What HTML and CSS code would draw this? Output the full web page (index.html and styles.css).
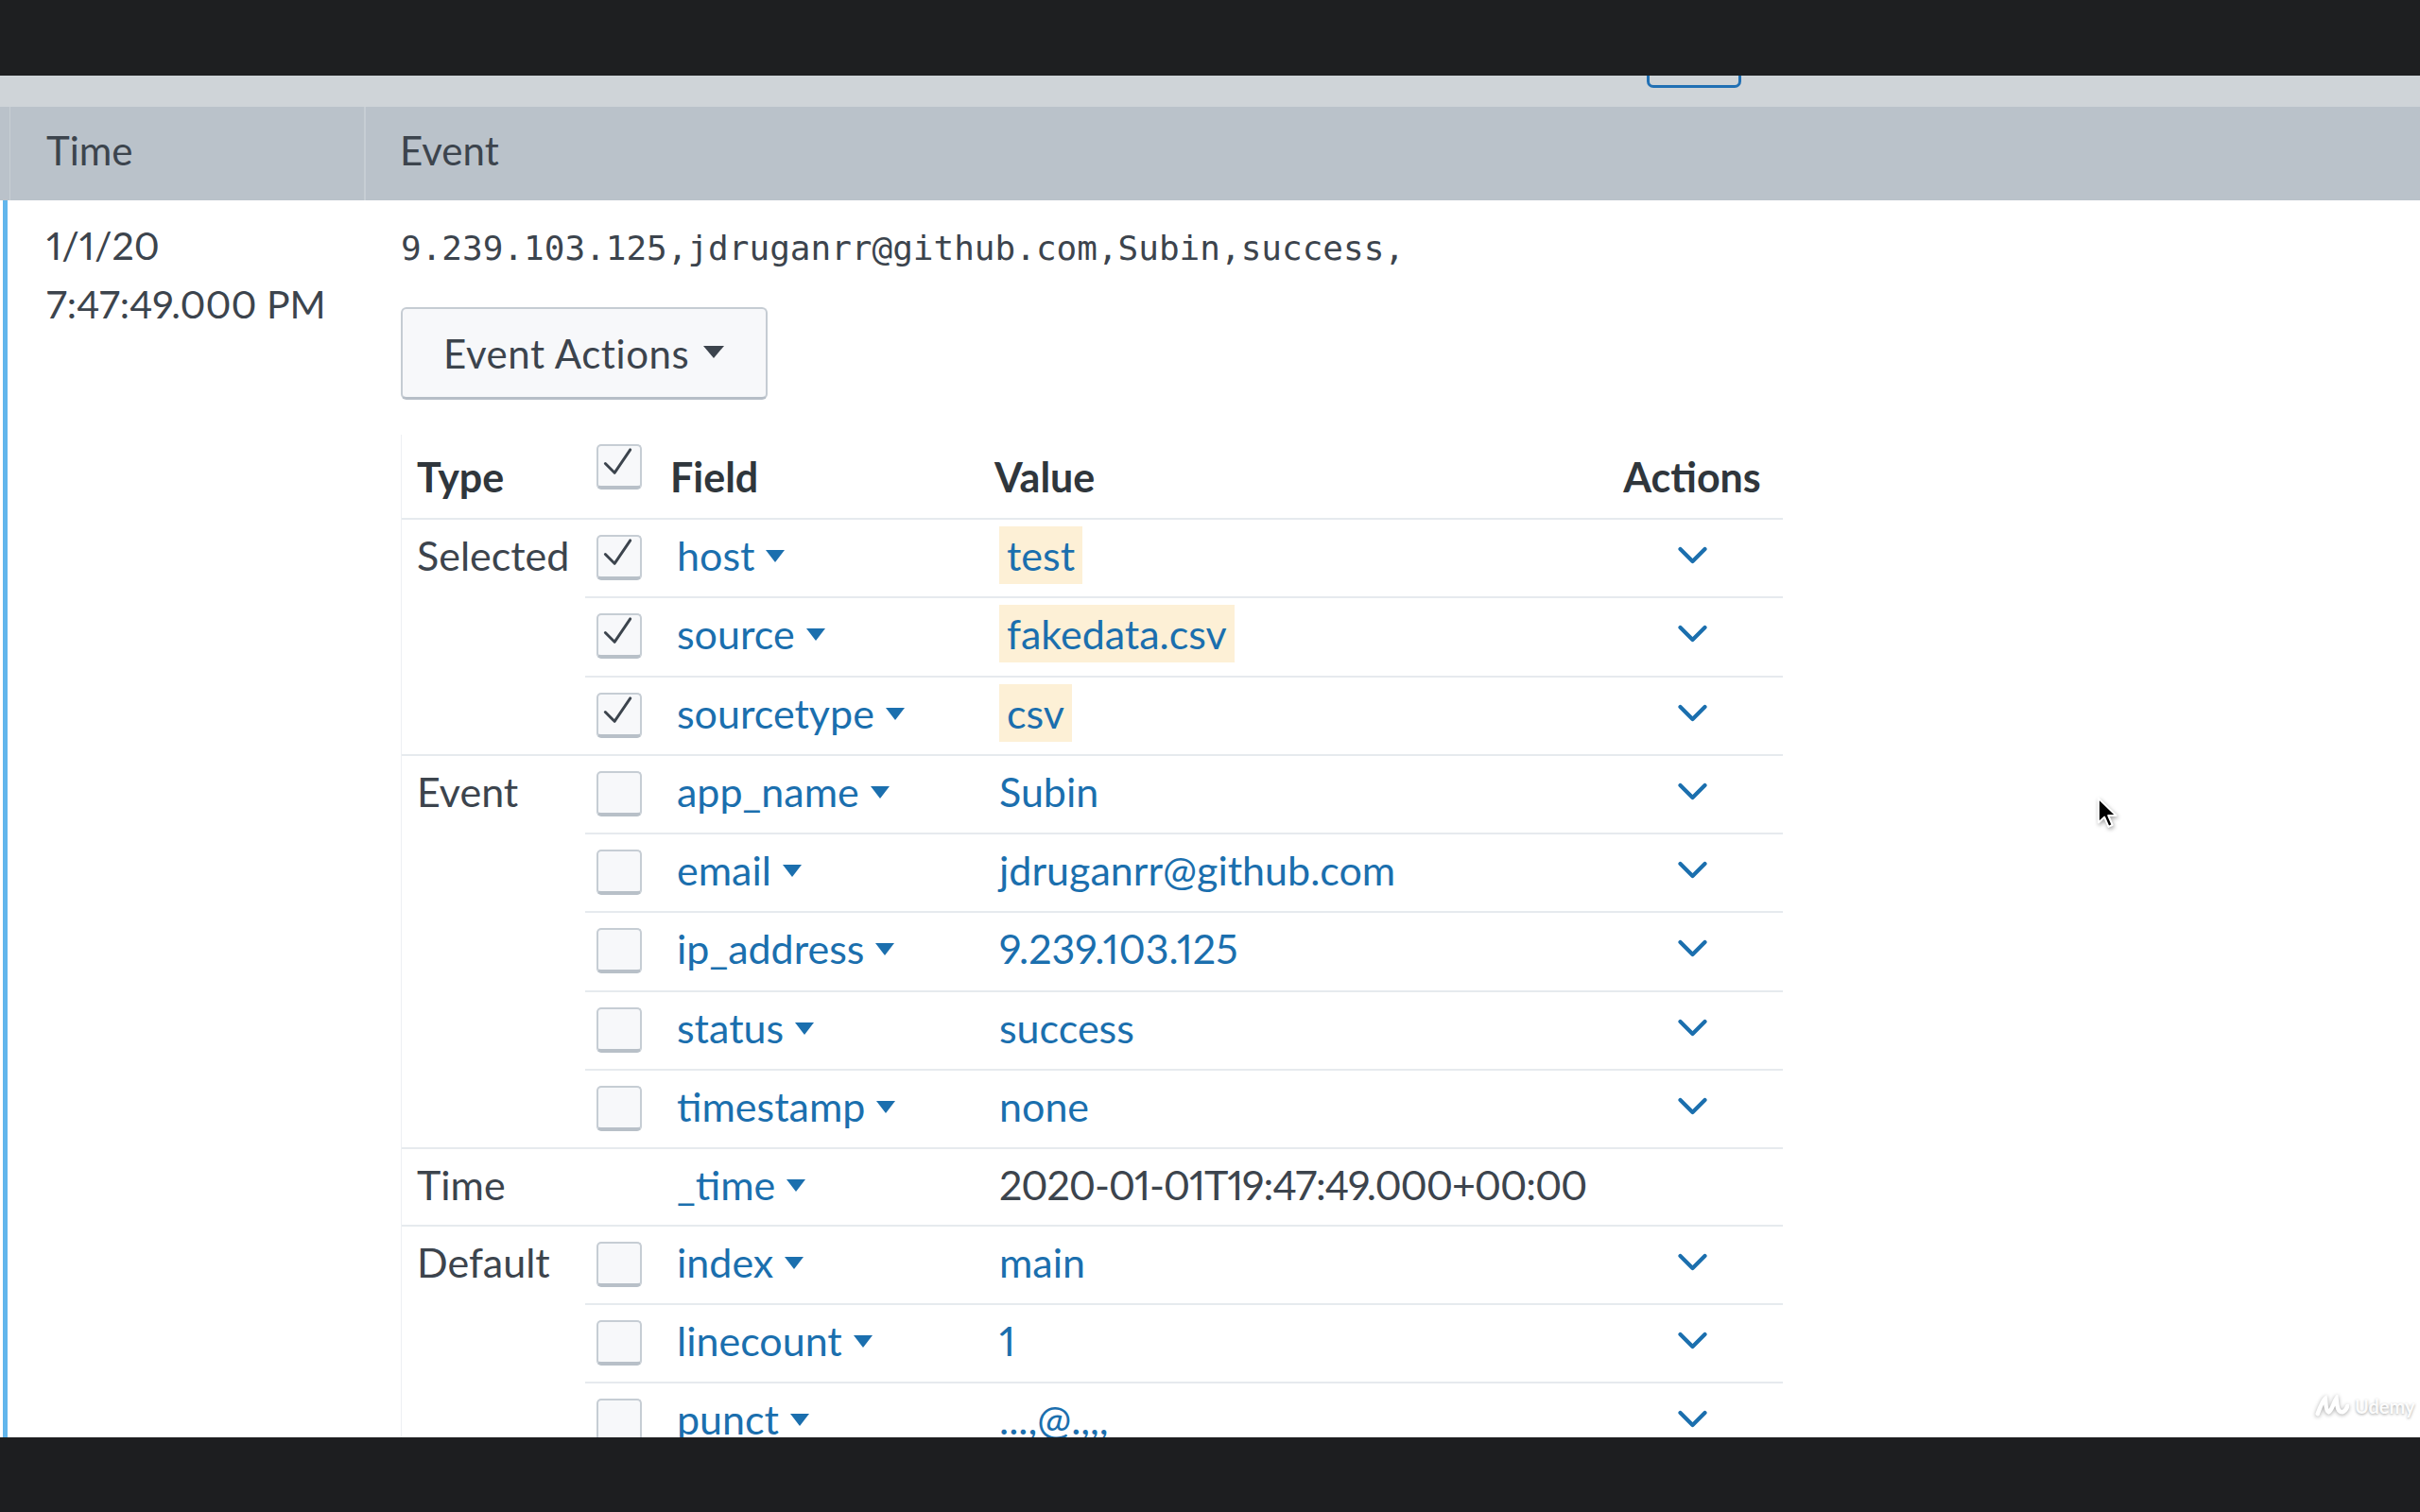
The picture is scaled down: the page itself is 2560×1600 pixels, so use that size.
FILE: index.html
```html
<!DOCTYPE html>
<html lang="en">
<head>
<meta charset="utf-8">
<title>Splunk event</title>
<link rel="stylesheet" href="styles.css">
</head>
<body>
<div class="screen">
  <div class="topbar"></div>
  <div class="main">
    <div class="toolbar"><span class="tb-btn"></span></div>
    <div class="thead">
      <div class="th-gutter"></div>
      <div class="th th-time">Time</div>
      <div class="th th-event">Event</div>
    </div>
    <div class="event">
      <div class="ev-time">
        <div>1/1/20</div>
        <div>7:47:49.000 PM</div>
      </div>
      <div class="ev-body">
        <div class="raw">9.239.103.125,jdruganrr@github.com,Subin,success,</div>
        <div class="btn-row">
          <button class="actions-btn" type="button">Event Actions<span class="btn-caret"></span></button>
        </div>
        <div class="table-wrap">
          <table class="fields">
            <colgroup>
              <col class="c-type"><col class="c-cb"><col class="c-field"><col class="c-value"><col class="c-act">
            </colgroup>
            <thead>
              <tr>
                <th class="type-h">Type</th>
                <th class="cb-h"><span class="checkbox"><svg class="tick" viewBox="0 0 44 43"><polyline points="7,19 17,29 34,4"/></svg></span></th>
                <th class="field-h">Field</th>
                <th class="value-h">Value</th>
                <th class="act-h">Actions</th>
              </tr>
            </thead>
            <tbody>
              <tr>
                <td class="type" rowspan="3">Selected</td>
                <td class="cb"><span class="checkbox"><svg class="tick" viewBox="0 0 44 43"><polyline points="7,19 17,29 34,4"/></svg></span></td>
                <td class="field">host<span class="caret"></span></td>
                <td class="value"><span class="hl">test</span></td>
                <td class="act"><svg class="chev" viewBox="0 0 30 20"><polyline points="2,3 15,16 28,3"/></svg></td>
              </tr>
              <tr>
                <td class="cb"><span class="checkbox"><svg class="tick" viewBox="0 0 44 43"><polyline points="7,19 17,29 34,4"/></svg></span></td>
                <td class="field">source<span class="caret"></span></td>
                <td class="value"><span class="hl">fakedata.csv</span></td>
                <td class="act"><svg class="chev" viewBox="0 0 30 20"><polyline points="2,3 15,16 28,3"/></svg></td>
              </tr>
              <tr>
                <td class="cb"><span class="checkbox"><svg class="tick" viewBox="0 0 44 43"><polyline points="7,19 17,29 34,4"/></svg></span></td>
                <td class="field">sourcetype<span class="caret"></span></td>
                <td class="value"><span class="hl">csv</span></td>
                <td class="act"><svg class="chev" viewBox="0 0 30 20"><polyline points="2,3 15,16 28,3"/></svg></td>
              </tr>
              <tr>
                <td class="type" rowspan="5">Event</td>
                <td class="cb"><span class="checkbox"></span></td>
                <td class="field">app_name<span class="caret"></span></td>
                <td class="value">Subin</td>
                <td class="act"><svg class="chev" viewBox="0 0 30 20"><polyline points="2,3 15,16 28,3"/></svg></td>
              </tr>
              <tr>
                <td class="cb"><span class="checkbox"></span></td>
                <td class="field">email<span class="caret"></span></td>
                <td class="value">jdruganrr@github.com</td>
                <td class="act"><svg class="chev" viewBox="0 0 30 20"><polyline points="2,3 15,16 28,3"/></svg></td>
              </tr>
              <tr>
                <td class="cb"><span class="checkbox"></span></td>
                <td class="field">ip_address<span class="caret"></span></td>
                <td class="value">9.239.103.125</td>
                <td class="act"><svg class="chev" viewBox="0 0 30 20"><polyline points="2,3 15,16 28,3"/></svg></td>
              </tr>
              <tr>
                <td class="cb"><span class="checkbox"></span></td>
                <td class="field">status<span class="caret"></span></td>
                <td class="value">success</td>
                <td class="act"><svg class="chev" viewBox="0 0 30 20"><polyline points="2,3 15,16 28,3"/></svg></td>
              </tr>
              <tr>
                <td class="cb"><span class="checkbox"></span></td>
                <td class="field">timestamp<span class="caret"></span></td>
                <td class="value">none</td>
                <td class="act"><svg class="chev" viewBox="0 0 30 20"><polyline points="2,3 15,16 28,3"/></svg></td>
              </tr>
              <tr class="row-time">
                <td class="type">Time</td>
                <td class="cb"></td>
                <td class="field">_time<span class="caret"></span></td>
                <td class="value plain">2020-01-01T19:47:49.000+00:00</td>
                <td class="act"></td>
              </tr>
              <tr>
                <td class="type" rowspan="3">Default</td>
                <td class="cb"><span class="checkbox"></span></td>
                <td class="field">index<span class="caret"></span></td>
                <td class="value">main</td>
                <td class="act"><svg class="chev" viewBox="0 0 30 20"><polyline points="2,3 15,16 28,3"/></svg></td>
              </tr>
              <tr>
                <td class="cb"><span class="checkbox"></span></td>
                <td class="field">linecount<span class="caret"></span></td>
                <td class="value">1</td>
                <td class="act"><svg class="chev" viewBox="0 0 30 20"><polyline points="2,3 15,16 28,3"/></svg></td>
              </tr>
              <tr>
                <td class="cb"><span class="checkbox"></span></td>
                <td class="field">punct<span class="caret"></span></td>
                <td class="value">...,@.,,,</td>
                <td class="act"><svg class="chev" viewBox="0 0 30 20"><polyline points="2,3 15,16 28,3"/></svg></td>
              </tr>
            </tbody>
          </table>
        </div>
      </div>
    </div>
  </div>
  <div class="bottombar"></div>

  <svg class="cursor" viewBox="0 0 20 28"><path d="M1.5 1.5 L1.5 22 L6.5 17.3 L10 25.5 L13.3 24 L9.8 16 L16.5 16 Z"/></svg>
  <div class="watermark"><svg class="wm-logo" viewBox="0 0 40 26"><path d="M3 22 C6 14 9 6 12 4 C13 10 12 18 16 20 C20 18 22 8 25 4 C26 12 26 20 32 20 C35 19 37 16 38 13"/></svg><span>Udemy</span></div>
</div>
</body>
</html>
```

FILE: styles.css
```css
* {
  box-sizing: border-box;
}

html,
body {
  margin: 0;
  padding: 0;
}

body {
  width: 2560px;
  height: 1600px;
  overflow: hidden;
  background: #ffffff;
  color: #3c444d;
  font-family: Lato, "Open Sans", "Liberation Sans", sans-serif;
  font-variant-numeric: proportional-nums;
}

.screen {
  position: relative;
  display: flex;
  flex-direction: column;
  height: 1600px;
}

.topbar {
  flex: none;
  height: 80px;
  background: #1e1f21;
}

.main {
  flex: 1;
  min-height: 0;
  overflow: hidden;
  background: #ffffff;
}

.bottombar {
  flex: none;
  height: 79px;
  background: #1d1e20;
}

/* grey toolbar strip with the clipped blue button */
.toolbar {
  display: flex;
  height: 33px;
  background: #cfd4d8;
}

.tb-btn {
  margin-left: 1742px;
  width: 100px;
  height: 13px;
  border: 3px solid #2170b4;
  border-top: 0;
  border-radius: 0 0 7px 7px;
}

/* results header */
.thead {
  display: flex;
  height: 99px;
  background: #bac2ca;
}

.th-gutter {
  width: 11px;
  border-right: 1px solid #c7ced4;
}

.th {
  font-size: 42px;
  line-height: 92px;
  color: #3c444d;
}

.th-time {
  width: 376px;
  padding-left: 38px;
  border-right: 2px solid #c7ced4;
}

.th-event {
  padding-left: 36px;
}

/* event row */
.event {
  display: flex;
  margin-left: 3px;
  border-left: 5px solid #62b6ec;
  min-height: 1400px;
}

.ev-time {
  flex: none;
  width: 379px;
  padding: 17px 0 0 41px;
  font-size: 41px;
  line-height: 62px;
  color: #3c444d;
}

.ev-body {
  flex: 1;
  padding-left: 37px;
}

.raw {
  padding-top: 20px;
  font-family: "DejaVu Sans Mono", "Liberation Mono", monospace;
  font-size: 36px;
  line-height: 62px;
  color: #3c444d;
  white-space: pre;
}

.btn-row {
  margin-top: 31px;
}

.actions-btn {
  display: inline-flex;
  align-items: center;
  gap: 15px;
  height: 98px;
  margin: 0;
  padding: 0 44px 0 43px;
  border: 2px solid #c5ccd3;
  border-bottom: 3px solid #b6bec7;
  border-radius: 6px;
  background: #f7f8fa;
  color: #3c444d;
  font-family: Lato, "Open Sans", sans-serif;
  font-size: 42px;
  letter-spacing: 0.6px;
}

.btn-caret {
  display: inline-block;
  width: 0;
  height: 0;
  margin-top: -3px;
  border-left: 11px solid transparent;
  border-right: 11px solid transparent;
  border-top: 13px solid #3c444d;
}

/* fields table */
.table-wrap {
  margin-top: 37px;
  width: 1462px;
  border-left: 1px solid #edf0f3;
}

.fields {
  width: 1461px;
  table-layout: fixed;
  border-collapse: separate;
  border-spacing: 0;
  font-size: 43px;
}

.c-type { width: 194px; }
.c-cb { width: 74px; }
.c-field { width: 349px; }
.c-value { width: 652px; }
.c-act { width: 192px; }

.fields th {
  padding: 16px 0 14px;
  line-height: 58px;
  font-weight: 700;
  color: #2f363c;
  text-align: left;
  vertical-align: top;
  white-space: nowrap;
}

.fields td {
  padding: 9px 0 14.3px;
  border-top: 2px solid #e6eaee;
  line-height: 58px;
  vertical-align: top;
  white-space: nowrap;
}

.fields .row-time td {
  padding-bottom: 12.3px;
}

.fields .type-h,
.fields .type {
  padding-left: 16px;
  color: #3c444d;
  font-weight: 400;
}

.fields .type-h {
  font-weight: 700;
  color: #2f363c;
}

.fields .cb-h {
  padding-top: 10px;
  padding-left: 12px;
}

.fields .cb {
  padding-left: 12px;
}

.fields .field-h {
  padding-left: 16px;
}

.fields .field {
  padding-left: 23px;
  color: #1b6fae;
}

.fields .value-h {
  padding-left: 10px;
}

.fields .value {
  padding-left: 15px;
  color: #1b6fae;
}

.fields .value.plain {
  color: #3c444d;
  letter-spacing: -1.1px;
}

.fields .act-h,
.fields .act {
  text-align: center;
}

.hl {
  padding: 5px 8px;
  background: #fdf0d6;
}

.caret {
  display: inline-block;
  width: 0;
  height: 0;
  margin-left: 12px;
  vertical-align: 9px;
  border-left: 10px solid transparent;
  border-right: 10px solid transparent;
  border-top: 13px solid #1b6fae;
}

.checkbox {
  display: block;
  width: 48px;
  height: 48px;
  border: 2px solid #c6cdd4;
  border-bottom: 4px solid #b8c0c8;
  border-radius: 5px;
  background: #f7f8fa;
}

.fields td .checkbox {
  margin-top: 7px;
}

.tick {
  display: block;
  width: 44px;
  height: 42px;
}

.tick polyline {
  fill: none;
  stroke: #3c444d;
  stroke-width: 3;
  stroke-linecap: round;
  stroke-linejoin: round;
}

.chev {
  display: inline-block;
  width: 31px;
  height: 20px;
  vertical-align: 6px;
}

.chev polyline {
  fill: none;
  stroke: #1b6fae;
  stroke-width: 4.2;
  stroke-linecap: round;
  stroke-linejoin: round;
}

/* overlays */
.cursor {
  position: absolute;
  left: 2218px;
  top: 843px;
  width: 25px;
  height: 35px;
  filter: drop-shadow(1px 2px 2px rgba(0, 0, 0, 0.35));
}

.cursor path {
  fill: #000000;
  stroke: #ffffff;
  stroke-width: 1.6;
  stroke-linejoin: round;
}

.watermark {
  position: absolute;
  left: 2449px;
  top: 1476px;
  display: flex;
  align-items: center;
  gap: 6px;
  color: rgba(255, 255, 255, 0.95);
  font-family: Lato, sans-serif;
  font-weight: 700;
  font-size: 20px;
  text-shadow: 0 1px 3px rgba(0, 0, 0, 0.35);
}

.wm-logo {
  width: 36px;
  height: 24px;
  filter: drop-shadow(0 1px 2px rgba(0, 0, 0, 0.35));
}

.wm-logo path {
  fill: none;
  stroke: #ffffff;
  stroke-width: 5;
  stroke-linecap: round;
}
```
